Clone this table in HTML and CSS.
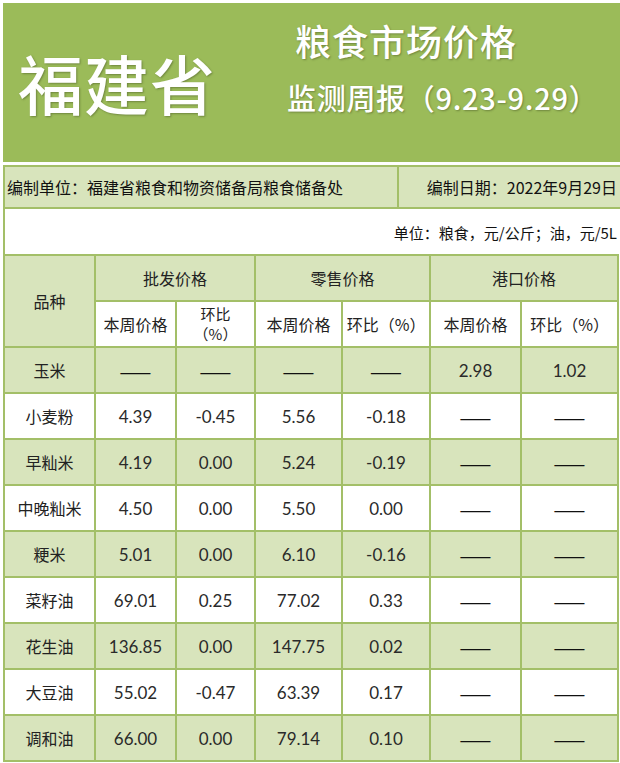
FILE: index.html
```html
<!DOCTYPE html>
<html lang="zh-CN">
<head>
<meta charset="utf-8">
<title>福建省粮食市场价格监测周报</title>
<link rel="stylesheet" href="styles.css">
</head>
<body>
<div class="sheet">
  <div class="banner">
    <div class="province">福建省</div>
    <div class="titles">
      <div class="t1">粮食市场价格</div>
      <div class="t2">监测周报（9.23-9.29）</div>
    </div>
  </div>
  <div class="info">
    <div class="org">编制单位：福建省粮食和物资储备局粮食储备处</div>
    <div class="date">编制日期：2022年9月29日</div>
  </div>
  <div class="unit">单位：粮食，元/公斤；油，元/5L</div>
  <table class="prices">
    <colgroup>
      <col class="c1"><col class="c2"><col class="c3"><col class="c4"><col class="c5"><col class="c6"><col>
    </colgroup>
    <thead>
      <tr class="g">
        <th rowspan="2">品种</th>
        <th colspan="2">批发价格</th>
        <th colspan="2">零售价格</th>
        <th colspan="2">港口价格</th>
      </tr>
      <tr class="sub">
        <th>本周价格</th>
        <th class="two"><span>环比</span><span>（%）</span></th>
        <th>本周价格</th>
        <th>环比（%）</th>
        <th>本周价格</th>
        <th>环比（%）</th>
      </tr>
    </thead>
    <tbody>
      <tr class="g"><th>玉米</th><td class="d">——</td><td class="d">——</td><td class="d">——</td><td class="d">——</td><td>2.98</td><td>1.02</td></tr>
      <tr><th>小麦粉</th><td>4.39</td><td>-0.45</td><td>5.56</td><td>-0.18</td><td class="d">——</td><td class="d">——</td></tr>
      <tr class="g"><th>早籼米</th><td>4.19</td><td>0.00</td><td>5.24</td><td>-0.19</td><td class="d">——</td><td class="d">——</td></tr>
      <tr><th>中晚籼米</th><td>4.50</td><td>0.00</td><td>5.50</td><td>0.00</td><td class="d">——</td><td class="d">——</td></tr>
      <tr class="g"><th>粳米</th><td>5.01</td><td>0.00</td><td>6.10</td><td>-0.16</td><td class="d">——</td><td class="d">——</td></tr>
      <tr><th>菜籽油</th><td>69.01</td><td>0.25</td><td>77.02</td><td>0.33</td><td class="d">——</td><td class="d">——</td></tr>
      <tr class="g"><th>花生油</th><td>136.85</td><td>0.00</td><td>147.75</td><td>0.02</td><td class="d">——</td><td class="d">——</td></tr>
      <tr><th>大豆油</th><td>55.02</td><td>-0.47</td><td>63.39</td><td>0.17</td><td class="d">——</td><td class="d">——</td></tr>
      <tr class="g"><th>调和油</th><td>66.00</td><td>0.00</td><td>79.14</td><td>0.10</td><td class="d">——</td><td class="d">——</td></tr>
    </tbody>
  </table>
</div>
</body>
</html>
```

FILE: styles.css
```css
html, body {
  margin: 0;
  padding: 0;
  background: #ffffff;
}

body {
  font-family: "Noto Sans CJK SC", "Noto Sans", sans-serif;
  color: #1e1e1e;
}

.sheet {
  margin-left: 3px;
  width: 617px;
}

.banner {
  margin-top: 3px;
  height: 159px;
  background: #9bbb59;
  display: flex;
  color: #ffffff;
  text-shadow: 1px 1px 2px rgba(60, 70, 30, 0.45);
}

.province {
  width: 284px;
  box-sizing: border-box;
  padding-left: 15px;
  display: flex;
  align-items: center;
  font-size: 65px;
  font-weight: 500;
  letter-spacing: 1px;
  line-height: 1;
}

.titles {
  display: flex;
  flex-direction: column;
  padding-top: 15px;
}

.t1 {
  font-size: 36px;
  line-height: 44px;
  font-weight: 500;
  padding-left: 8px;
  letter-spacing: 1px;
}

.t2 {
  margin-top: 13px;
  font-size: 29px;
  line-height: 44px;
  font-weight: 500;
  letter-spacing: 0.7px;
}

.info {
  margin-top: 3px;
  display: flex;
  height: 40px;
  border: 2px solid #a3bf68;
  border-right: none;
  background: #d8e4bc;
  font-size: 16px;
  color: #111;
}

.org {
  width: 390px;
  border-right: 2px solid #a3bf68;
  padding-left: 2px;
  display: flex;
  align-items: center;
}

.date {
  flex: 1;
  display: flex;
  align-items: center;
  justify-content: flex-end;
  padding-right: 3px;
}

.unit {
  height: 46px;
  border-left: 2px solid #a3bf68;
  display: flex;
  align-items: center;
  justify-content: flex-end;
  padding-right: 3px;
  font-size: 15px;
  color: #111;
}

.prices {
  width: 616px;
  table-layout: fixed;
  border-collapse: collapse;
  margin-top: -1px;
}

.prices col.c1 { width: 91px; }
.prices col.c2 { width: 81px; }
.prices col.c3 { width: 79px; }
.prices col.c4 { width: 87px; }
.prices col.c5 { width: 88px; }
.prices col.c6 { width: 91px; }

.prices th,
.prices td {
  border: 2px solid #a3bf68;
  text-align: center;
  vertical-align: middle;
  padding: 0;
  height: 44px;
  background: #ffffff;
}

.prices th {
  font-weight: 400;
  font-size: 16px;
  color: #222;
}

.prices td {
  font-family: "Lato", "Open Sans", sans-serif;
  font-size: 17px;
  color: #2a2a2a;
}

.prices tr.g th,
.prices tr.g td {
  background: #d8e4bc;
}

.prices th.two {
  font-size: 15px;
  line-height: 20px;
}

.prices th.two span {
  display: block;
}

.prices td.d {
  font-family: "Noto Sans CJK SC", sans-serif;
  font-size: 19px;
  color: #111;
}
```
